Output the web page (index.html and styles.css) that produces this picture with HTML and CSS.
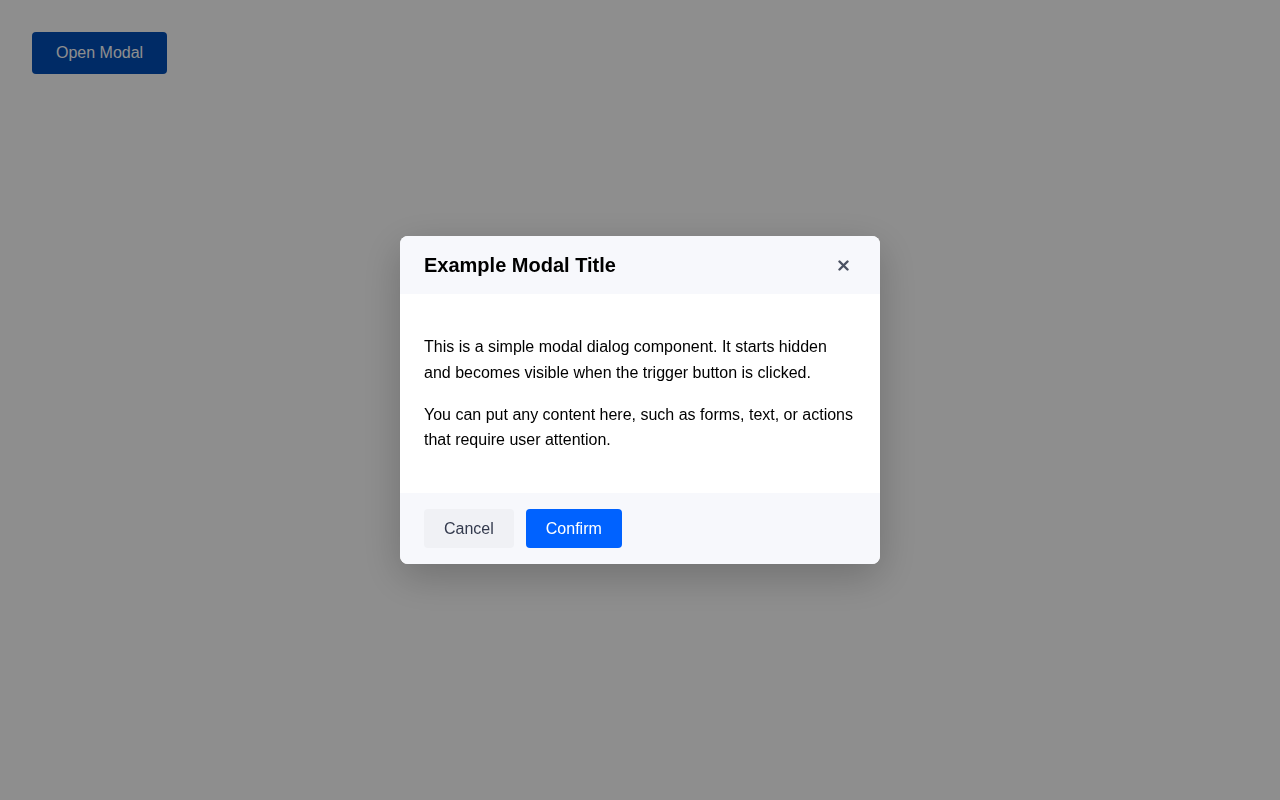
FILE: index.html
```html
<!DOCTYPE html>
<html lang="en">
<head>
<meta charset="utf-8">
<title>Modal</title>
<link rel="stylesheet" href="styles.css">
</head>
<body>
<div class="page">
  <button class="open-btn">Open Modal</button>
</div>
<div class="overlay">
  <div class="modal">
    <div class="modal-header">
      <h2 class="modal-title">Example Modal Title</h2>
      <button class="close-btn" aria-label="Close">
        <svg width="11" height="11" viewBox="0 0 11 11"><path d="M1.5 1.5 L9.5 9.5 M9.5 1.5 L1.5 9.5" stroke="#4b5263" stroke-width="2.4" stroke-linecap="round"/></svg>
      </button>
    </div>
    <div class="modal-body">
      <p>This is a simple modal dialog component. It starts hidden and becomes visible when the trigger button is clicked.</p>
      <p>You can put any content here, such as forms, text, or actions that require user attention.</p>
    </div>
    <div class="modal-footer">
      <button class="btn btn-cancel">Cancel</button>
      <button class="btn btn-confirm">Confirm</button>
    </div>
  </div>
</div>
</body>
</html>
```
FILE: styles.css
```css
* { box-sizing: border-box; }
html, body { margin: 0; height: 100%; }
body {
  font-family: "Liberation Sans", Arial, sans-serif;
  background: #ffffff;
  color: #000;
}
.page { padding: 32px; }
.open-btn {
  font-family: inherit;
  font-size: 16px;
  line-height: 18px;
  padding: 12px 24px;
  border: none;
  border-radius: 4px;
  background: #004db8;
  color: #ffffff;
  cursor: pointer;
}
.overlay {
  position: fixed;
  inset: 0;
  background: rgba(0, 0, 0, 0.445);
  display: flex;
  align-items: center;
  justify-content: center;
}
.modal {
  width: 480px;
  background: #ffffff;
  border-radius: 8px;
  overflow: hidden;
  box-shadow: 0 12px 40px rgba(0, 0, 0, 0.22);
}
.modal-header {
  background: #f7f8fc;
  padding: 16px 24px;
  display: flex;
  align-items: center;
  justify-content: space-between;
}
.modal-title {
  margin: 0;
  font-size: 20px;
  line-height: 26px;
  font-weight: bold;
}
.close-btn {
  border: none;
  background: none;
  padding: 0;
  width: 26px;
  height: 26px;
  display: flex;
  align-items: center;
  justify-content: center;
  cursor: pointer;
}
.modal-body {
  padding: 24px;
  font-size: 16px;
  line-height: 25.6px;
}
.modal-body p { margin: 16px 0; }
.modal-footer {
  background: #f7f8fc;
  padding: 16px 24px;
  display: flex;
  gap: 12px;
}
.btn {
  font-family: inherit;
  font-size: 16px;
  line-height: 19px;
  padding: 10px 20px;
  border: none;
  border-radius: 4px;
  cursor: pointer;
}
.btn-cancel { background: #f0f1f5; color: #333a4d; }
.btn-confirm { background: #0062ff; color: #ffffff; }
```
